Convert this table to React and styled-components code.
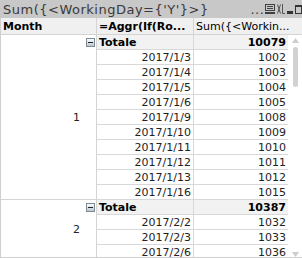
import React from "react";
import styled, { createGlobalStyle } from "styled-components";

const Global = createGlobalStyle`
  html, body {
    margin: 0;
    padding: 0;
    background: #ffffff;
  }
`;

const Window = styled.div`
  width: 302px;
  height: 258px;
  font-family: "DejaVu Sans", Verdana, sans-serif;
  font-size: 11px;
  color: #000000;
`;

const Caption = styled.div`
  height: 18px;
  background: #c8c8c8;
  display: flex;
  align-items: center;
  font-size: 13px;
  color: #3a3a3a;
`;

const CaptionTitle = styled.span`
  width: 265px;
  flex: none;
  padding-left: 3px;
  box-sizing: border-box;
  letter-spacing: 0.5px;
  white-space: pre;
  overflow: hidden;
`;

const CaptionTools = styled.span`
  width: 37px;
  height: 12px;
  flex: none;
  display: flex;
  align-items: center;
  gap: 2px;
`;

const Tool = styled.svg`
  display: block;
  flex: none;
`;

const Frame = styled.div`
  height: 240px;
  box-sizing: border-box;
  border-left: 1px solid #cfcfcf;
  border-bottom: 1px solid #cfcfcf;
  overflow: hidden;
`;

const HeaderRow = styled.div`
  display: grid;
  grid-template-columns: 96px 97px 1fr;
  height: 17px;
  background: #f0f0f0;
  border-bottom: 1px solid #d4d4d4;
  box-sizing: border-box;
`;

const HeadCell = styled.div`
  display: flex;
  align-items: center;
  padding-left: 2px;
  font-weight: ${(p) => (p.$bold ? "bold" : "normal")};
  border-right: ${(p) => (p.$last ? "none" : "1px solid #d4d4d4")};
  white-space: nowrap;
  overflow: hidden;
`;

const Body = styled.div`
  height: 222px;
  display: flex;
  overflow: hidden;
`;

const Grid = styled.div`
  display: grid;
  grid-template-columns: 96px 97px 94px;
  grid-auto-rows: 15px;
  width: 287px;
  flex: none;
  align-content: start;
`;

const DimCell = styled.div`
  grid-column: 1;
  grid-row: span ${(p) => p.$span};
  position: relative;
  display: flex;
  align-items: center;
  justify-content: flex-end;
  padding-right: 16px;
  border-right: 1px solid #d4d4d4;
  border-bottom: 1px solid #d4d4d4;
  color: #222222;
`;

const Toggle = styled.svg`
  position: absolute;
  top: 3px;
  right: 1px;
`;

const Cell = styled.div`
  grid-column: ${(p) => p.$col};
  display: flex;
  align-items: center;
  justify-content: ${(p) => (p.$left ? "flex-start" : "flex-end")};
  padding: 0 2px;
  box-sizing: border-box;
  border-bottom: 1px solid #d8d8d8;
  border-right: ${(p) => (p.$col === 2 ? "1px solid #d8d8d8" : "none")};
  background: ${(p) => (p.$total ? "#f2f2f2" : "#ffffff")};
  font-weight: ${(p) => (p.$total ? "bold" : "normal")};
  color: ${(p) => (p.$total ? "#000000" : "#222222")};
  white-space: nowrap;
`;

const Scroll = styled.div`
  width: 14px;
  flex: none;
  display: flex;
  flex-direction: column;
  align-items: center;
  padding: 3px 0 0;
  box-sizing: border-box;
`;

const Thumb = styled.div`
  width: 5px;
  height: 40px;
  margin-top: 4px;
  border-radius: 3px;
  background: #d2d2d2;
`;

const Spacer = styled.div`
  flex: 1;
`;

const groups = [
  {
    month: "1",
    total: "10079",
    rows: [
      ["2017/1/3", "1002"],
      ["2017/1/4", "1003"],
      ["2017/1/5", "1004"],
      ["2017/1/6", "1005"],
      ["2017/1/9", "1008"],
      ["2017/1/10", "1009"],
      ["2017/1/11", "1010"],
      ["2017/1/12", "1011"],
      ["2017/1/13", "1012"],
      ["2017/1/16", "1015"],
    ],
  },
  {
    month: "2",
    total: "10387",
    rows: [
      ["2017/2/2", "1032"],
      ["2017/2/3", "1033"],
      ["2017/2/6", "1036"],
    ],
  },
];

const MinusBox = () => (
  <Toggle width="9" height="9" viewBox="0 0 9 9">
    <defs>
      <linearGradient id="tg" x1="0" y1="0" x2="0" y2="1">
        <stop offset="0" stopColor="#ffffff" />
        <stop offset="1" stopColor="#b9c3cc" />
      </linearGradient>
    </defs>
    <rect x="0.5" y="0.5" width="8" height="8" fill="url(#tg)" stroke="#7d8b98" />
    <rect x="2" y="4" width="5" height="1" fill="#222" />
  </Toggle>
);

const Arrow = ({ down }) => (
  <svg width="7" height="5" viewBox="0 0 7 5">
    <polygon points={down ? "0,0 7,0 3.5,5" : "0,5 7,5 3.5,0"} fill="#cccccc" />
  </svg>
);

const title = "Sum({<WorkingDay={'Y'}>}         ...";

const App = () => {
  return (
    <>
      <Global />
      <Window>
        <Caption>
          <CaptionTitle>{title}</CaptionTitle>
          <CaptionTools>
            <Tool width="10" height="10" viewBox="0 0 10 10">
              <rect x="0.5" y="0.5" width="9" height="6" fill="none" stroke="#404040" />
              <rect x="2" y="2" width="6" height="1" fill="#404040" />
              <rect x="2" y="4" width="6" height="1" fill="#404040" />
              <rect x="0" y="8" width="10" height="2" fill="#404040" />
            </Tool>
            <Tool width="8" height="10" viewBox="0 0 8 10">
              <path d="M0.5 0.5 L3.5 9.5 M3.5 0.5 L0.5 9.5 M5.5 0 V9.5 H8" stroke="#555555" strokeWidth="1" fill="none" />
            </Tool>
            <Tool width="6" height="10" viewBox="0 0 6 10">
              <rect x="0" y="7" width="6" height="3" fill="#333333" />
            </Tool>
            <Tool width="7" height="10" viewBox="0 0 7 10">
              <rect x="0.5" y="1.5" width="6" height="8" fill="none" stroke="#333333" />
              <rect x="0" y="1" width="7" height="2" fill="#333333" />
            </Tool>
          </CaptionTools>
        </Caption>
        <Frame>
          <HeaderRow>
            <HeadCell $bold>Month</HeadCell>
            <HeadCell $bold>=Aggr(If(Ro...</HeadCell>
            <HeadCell $last>Sum({"{<"}Workin...</HeadCell>
          </HeaderRow>
          <Body>
            <Grid>
              {groups.map((g) => (
                <React.Fragment key={g.month}>
                  <DimCell $span={g.rows.length + 1}>
                    <MinusBox />
                    {g.month}
                  </DimCell>
                  <Cell $col={2} $total $left>
                    Totale
                  </Cell>
                  <Cell $col={3} $total>
                    {g.total}
                  </Cell>
                  {g.rows.map(([d, v]) => (
                    <React.Fragment key={d}>
                      <Cell $col={2}>{d}</Cell>
                      <Cell $col={3}>{v}</Cell>
                    </React.Fragment>
                  ))}
                </React.Fragment>
              ))}
            </Grid>
            <Scroll>
              <Arrow />
              <Thumb />
              <Spacer />
              <Arrow down />
            </Scroll>
          </Body>
        </Frame>
      </Window>
    </>
  );
};

export default App;
